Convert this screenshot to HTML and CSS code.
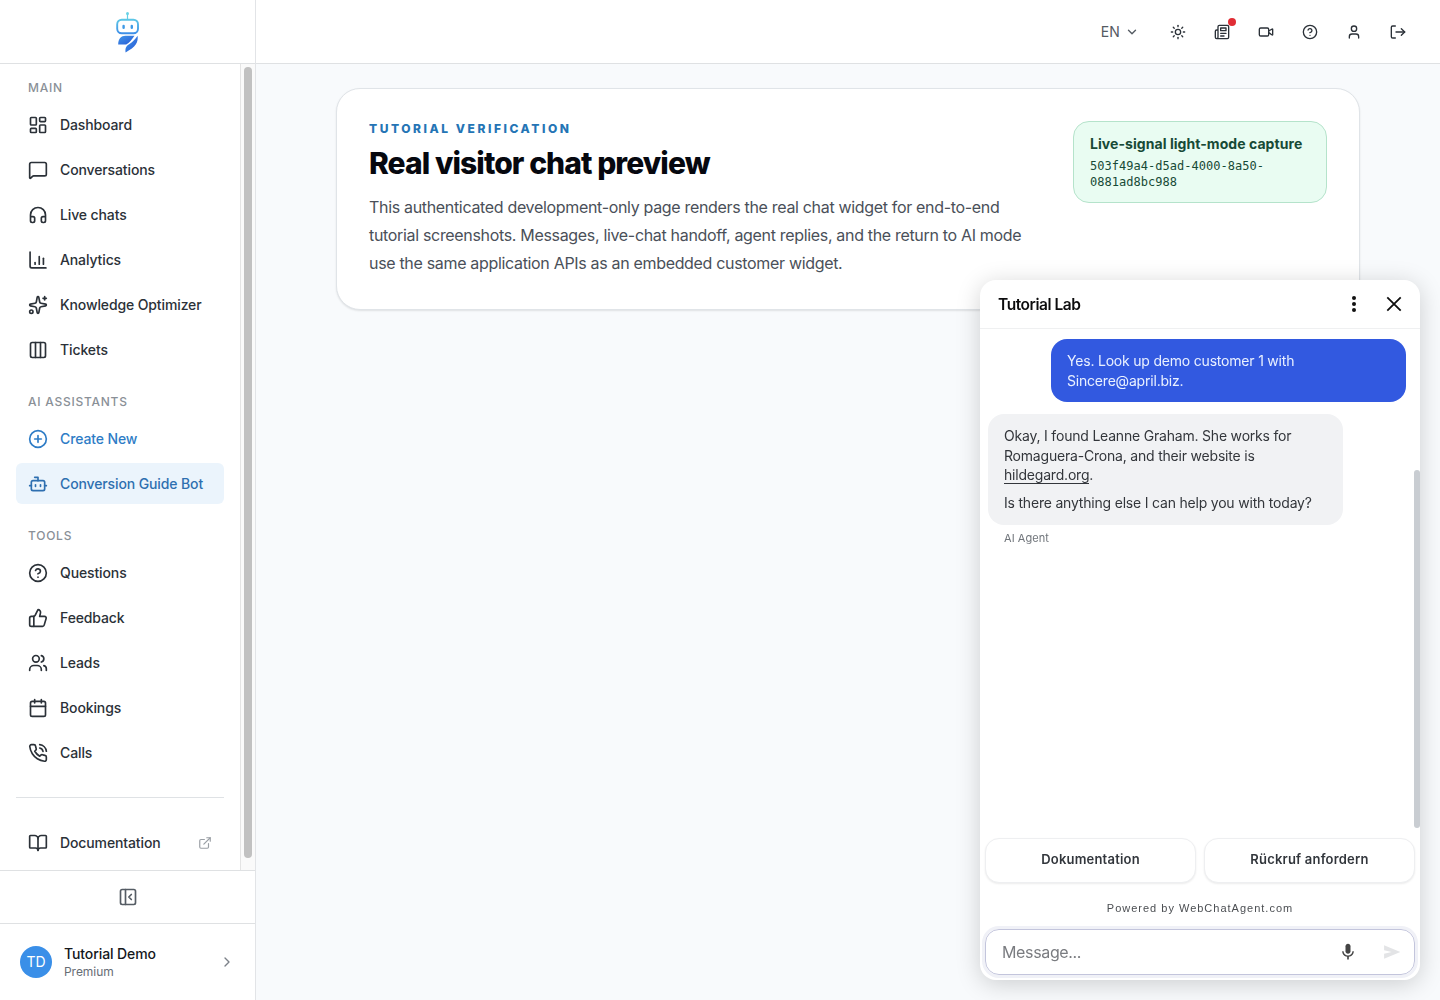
FILE: index.html
```html
<!DOCTYPE html>
<html lang="en">
<head>
    <meta charset="UTF-8">
    <meta name="viewport" content="width=device-width, initial-scale=1.0">
    <title>Real visitor chat preview</title>
    <link rel="stylesheet" href="styles.css">
</head>
<body>
<div class="app">
    <aside class="sidebar">
        <div class="logo">
            <svg width="24" height="42" viewBox="0 0 24 42">
                <defs>
                    <linearGradient id="head" x1="0" y1="0" x2="0" y2="1">
                        <stop offset="0" stop-color="#5cc6e6"/>
                        <stop offset="1" stop-color="#3d8fe8"/>
                    </linearGradient>
                    <linearGradient id="wing" x1="0" y1="0" x2="1" y2="1">
                        <stop offset="0" stop-color="#3f97ea"/>
                        <stop offset="1" stop-color="#2857d4"/>
                    </linearGradient>
                </defs>
                <circle cx="11.500" cy="2.600" r="1.500" fill="#6bd3e6"/>
                <path d="M11.500 3v6" stroke="#62cfe6" stroke-width="1.200"/>
                <rect x="1.200" y="8.700" width="20.800" height="13.600" rx="4.500" fill="none" stroke="url(#head)" stroke-width="1.900"/>
                <rect x="6.400" y="13.700" width="2.400" height="4.200" rx="1.200" fill="#3f9ae6"/>
                <rect x="14.600" y="13.700" width="2.400" height="4.200" rx="1.200" fill="#3f9ae6"/>
                <path d="M18.500 24.700H9.500c-4.500 0-7.300 3.200-7.300 8.800h8c3.300-1.500 5.500-4.800 8.300-8.800z" fill="url(#wing)"/>
                <path d="M21.600 24.800c.8 6.400-1.800 11.200-12 16.600-.6-4 .4-6.500 3.900-8.500 3.600-2 5.500-4.700 8.100-8.100z" fill="url(#wing)"/>
            </svg>
        </div>
        <div class="nav-area">
            <nav class="nav">
                <h3 class="nav-title">MAIN</h3>
                <a class="nav-item">
                    <svg class="icon" viewBox="0 0 24 24"><rect width="7" height="9" x="3" y="3" rx="1"/><rect width="7" height="5" x="14" y="3" rx="1"/><rect width="7" height="9" x="14" y="12" rx="1"/><rect width="7" height="5" x="3" y="16" rx="1"/></svg>
                    <span>Dashboard</span>
                </a>
                <a class="nav-item">
                    <svg class="icon" viewBox="0 0 24 24"><path d="M22 17a2 2 0 0 1-2 2H6.828a2 2 0 0 0-1.414.586l-2.202 2.202A.71.71 0 0 1 2 21.286V5a2 2 0 0 1 2-2h16a2 2 0 0 1 2 2z"/></svg>
                    <span>Conversations</span>
                </a>
                <a class="nav-item">
                    <svg class="icon" viewBox="0 0 24 24"><path d="M3 14h3a2 2 0 0 1 2 2v3a2 2 0 0 1-2 2H5a2 2 0 0 1-2-2v-7a9 9 0 0 1 18 0v7a2 2 0 0 1-2 2h-1a2 2 0 0 1-2-2v-3a2 2 0 0 1 2-2h3"/></svg>
                    <span>Live chats</span>
                </a>
                <a class="nav-item">
                    <svg class="icon" viewBox="0 0 24 24"><path d="M2.500 2.500v17a2 2 0 0 0 2 2h17"/><path d="M8.500 17v-2"/><path d="M13.500 17V8"/><path d="M18.500 17V10"/></svg>
                    <span>Analytics</span>
                </a>
                <a class="nav-item">
                    <svg class="icon" viewBox="0 0 24 24"><path d="M11.017 2.814a1 1 0 0 1 1.966 0l1.051 5.558a2 2 0 0 0 1.594 1.594l5.558 1.051a1 1 0 0 1 0 1.966l-5.558 1.051a2 2 0 0 0-1.594 1.594l-1.051 5.558a1 1 0 0 1-1.966 0l-1.051-5.558a2 2 0 0 0-1.594-1.594l-5.558-1.051a1 1 0 0 1 0-1.966l5.558-1.051a2 2 0 0 0 1.594-1.594z"/><path d="M20 2v4"/><path d="M22 4h-4"/><circle cx="4" cy="20" r="2"/></svg>
                    <span>Knowledge Optimizer</span>
                </a>
                <a class="nav-item">
                    <svg class="icon" viewBox="0 0 24 24"><rect width="18" height="18" x="3" y="3" rx="2"/><path d="M9 3v18"/><path d="M15 3v18"/></svg>
                    <span>Tickets</span>
                </a>
                <h3 class="nav-title nav-title-next">AI ASSISTANTS</h3>
                <a class="nav-item nav-item-link">
                    <svg class="icon" viewBox="0 0 24 24"><circle cx="12" cy="12" r="10"/><path d="M8 12h8"/><path d="M12 8v8"/></svg>
                    <span>Create New</span>
                </a>
                <a class="nav-item nav-item-active">
                    <svg class="icon" viewBox="0 0 24 24"><path d="M12 8V4H8"/><rect width="16" height="12" x="4" y="8" rx="2"/><path d="M2 14h2"/><path d="M20 14h2"/><path d="M15 13v2"/><path d="M9 13v2"/></svg>
                    <span>Conversion Guide Bot</span>
                </a>
                <h3 class="nav-title nav-title-next">TOOLS</h3>
                <a class="nav-item">
                    <svg class="icon" viewBox="0 0 24 24"><circle cx="12" cy="12" r="10"/><path d="M9.090 9a3 3 0 0 1 5.830 1c0 2-3 3-3 3"/><path d="M12 17h.01"/></svg>
                    <span>Questions</span>
                </a>
                <a class="nav-item">
                    <svg class="icon" viewBox="0 0 24 24"><path d="M7 10v12"/><path d="M15 5.880 14 10h5.830a2 2 0 0 1 1.920 2.560l-2.330 8A2 2 0 0 1 17.500 22H4a2 2 0 0 1-2-2v-8a2 2 0 0 1 2-2h2.760a2 2 0 0 0 1.790-1.110L12 2a3.130 3.130 0 0 1 3 3.880z"/></svg>
                    <span>Feedback</span>
                </a>
                <a class="nav-item">
                    <svg class="icon" viewBox="0 0 24 24"><path d="M16 21v-1a5 5 0 0 0-5-5H7a5 5 0 0 0-5 5v1"/><circle cx="9.500" cy="7" r="4"/><path d="M22 21v-2a4 4 0 0 0-3-3.870"/><path d="M16 3.130a4 4 0 0 1 0 7.750"/></svg>
                    <span>Leads</span>
                </a>
                <a class="nav-item">
                    <svg class="icon" viewBox="0 0 24 24"><path d="M8 2v4"/><path d="M16 2v4"/><rect width="18" height="18" x="3" y="4" rx="2"/><path d="M3 10h18"/></svg>
                    <span>Bookings</span>
                </a>
                <a class="nav-item">
                    <svg class="icon" viewBox="0 0 24 24"><path d="M22 16.920v3a2 2 0 0 1-2.180 2 19.790 19.790 0 0 1-8.630-3.070 19.500 19.500 0 0 1-6-6 19.790 19.790 0 0 1-3.070-8.670A2 2 0 0 1 4.110 2h3a2 2 0 0 1 2 1.720c.127.960.361 1.903.700 2.810a2 2 0 0 1-.450 2.110L8.090 9.910a16 16 0 0 0 6 6l1.270-1.270a2 2 0 0 1 2.110-.450c.907.339 1.850.573 2.810.700A2 2 0 0 1 22 16.920z"/><path d="M14.050 2a9 9 0 0 1 8 7.940"/><path d="M14.050 6A5 5 0 0 1 18 10"/></svg>
                    <span>Calls</span>
                </a>
                <div class="nav-divider"></div>
                <a class="nav-item">
                    <svg class="icon" viewBox="0 0 24 24"><path d="M12 7v14"/><path d="M3 18a1 1 0 0 1-1-1V4a1 1 0 0 1 1-1h5a4 4 0 0 1 4 4 4 4 0 0 1 4-4h5a1 1 0 0 1 1 1v13a1 1 0 0 1-1 1h-6a3 3 0 0 0-3 3 3 3 0 0 0-3-3z"/></svg>
                    <span>Documentation</span>
                    <svg class="icon icon-external" viewBox="0 0 24 24"><path d="M15 3h6v6"/><path d="M10 14 21 3"/><path d="M18 13v6a2 2 0 0 1-2 2H5a2 2 0 0 1-2-2V8a2 2 0 0 1 2-2h6"/></svg>
                </a>
            </nav>
            <div class="scroll-track"><div class="scroll-thumb"></div></div>
        </div>
        <div class="collapse">
            <svg class="icon" viewBox="0 0 24 24"><rect width="18" height="18" x="3" y="3" rx="2"/><path d="M9 3v18"/><path d="m16 15-3-3 3-3"/></svg>
        </div>
        <div class="user">
            <div class="avatar">TD</div>
            <div class="user-info">
                <div class="user-name">Tutorial Demo</div>
                <div class="user-plan">Premium</div>
            </div>
            <svg class="icon icon-chevron" viewBox="0 0 24 24"><path d="m9 18 6-6-6-6"/></svg>
        </div>
    </aside>

    <div class="page">
        <header class="topbar">
            <div class="lang">
                <span>EN</span>
                <svg class="icon" viewBox="0 0 24 24"><path d="m6 9 6 6 6-6"/></svg>
            </div>
            <div class="top-btn">
                <svg class="icon" viewBox="0 0 24 24"><circle cx="12" cy="12" r="4"/><path d="M12 2v2"/><path d="M12 20v2"/><path d="m4.930 4.930 1.410 1.410"/><path d="m17.660 17.660 1.410 1.410"/><path d="M2 12h2"/><path d="M20 12h2"/><path d="m6.340 17.660-1.410 1.410"/><path d="m19.070 4.930-1.410 1.410"/></svg>
            </div>
            <div class="top-btn">
                <svg class="icon" viewBox="0 0 24 24"><path d="M4 22h16a2 2 0 0 0 2-2V4a2 2 0 0 0-2-2H8a2 2 0 0 0-2 2v16a2 2 0 0 1-4 0v-9a2 2 0 0 1 2-2h2"/><path d="M18 14h-8"/><path d="M15 18h-5"/><path d="M10 6h8v4h-8z"/></svg>
                <span class="dot"></span>
            </div>
            <div class="top-btn">
                <svg class="icon" viewBox="0 0 24 24"><path d="m16 13 5.223 3.482a.5.5 0 0 0 .777-.416V7.870a.5.5 0 0 0-.752-.432L16 10.500"/><rect x="2" y="6" width="14" height="12" rx="2"/></svg>
            </div>
            <div class="top-btn">
                <svg class="icon" viewBox="0 0 24 24"><circle cx="12" cy="12" r="10"/><path d="M9.090 9a3 3 0 0 1 5.830 1c0 2-3 3-3 3"/><path d="M12 17h.01"/></svg>
            </div>
            <div class="top-btn">
                <svg class="icon" viewBox="0 0 24 24"><path d="M19 21v-2a4 4 0 0 0-4-4H9a4 4 0 0 0-4 4v2"/><circle cx="12" cy="7" r="4"/></svg>
            </div>
            <div class="top-btn">
                <svg class="icon" viewBox="0 0 24 24"><path d="m17 17 5-5-5-5"/><path d="M22 12H9"/><path d="M8 21H4a2 2 0 0 1-2-2V5a2 2 0 0 1 2-2h4"/></svg>
            </div>
        </header>

        <main class="content">
            <section class="card">
                <div class="card-text">
                    <p class="eyebrow">TUTORIAL VERIFICATION</p>
                    <h1>Real visitor chat preview</h1>
                    <p class="intro">This authenticated development-only page renders the real chat widget for end-to-end<br>tutorial screenshots. Messages, live-chat handoff, agent replies, and the return to AI mode<br>use the same application APIs as an embedded customer widget.</p>
                </div>
                <div class="capture">
                    <p class="capture-title">Live-signal light-mode capture</p>
                    <p class="capture-id">503f49a4-d5ad-4000-8a50-<br>0881ad8bc988</p>
                </div>
            </section>
        </main>
    </div>
</div>

<div class="chat">
    <div class="chat-header">
        <span class="chat-title">Tutorial Lab</span>
        <svg class="chat-more" width="24" height="24" viewBox="0 0 24 24"><circle cx="12" cy="6" r="2"/><circle cx="12" cy="12" r="2"/><circle cx="12" cy="18" r="2"/></svg>
        <svg class="chat-close" width="24" height="24" viewBox="0 0 24 24"><path d="M5.300 5.300l13.400 13.400M18.700 5.300L5.300 18.700"/></svg>
    </div>
    <div class="chat-body">
        <div class="messages">
            <div class="msg msg-user">
                <p>Yes. Look up demo customer 1 with<br>Sincere@april.biz.</p>
            </div>
            <div class="msg msg-bot">
                <p>Okay, I found Leanne Graham. She works for<br>Romaguera-Crona, and their website is<br><a class="msg-link">hildegard.org</a>.</p>
                <p>Is there anything else I can help you with today?</p>
            </div>
            <div class="msg-author">AI Agent</div>
        </div>
        <div class="chat-thumb"></div>
    </div>
    <div class="quick">
        <button class="quick-btn">Dokumentation</button>
        <button class="quick-btn">Rückruf anfordern</button>
    </div>
    <div class="powered">Powered by WebChatAgent.com</div>
    <div class="composer">
        <span class="placeholder">Message...</span>
        <svg class="mic" width="20" height="20" viewBox="0 0 24 24"><path d="M12 14c1.660 0 3-1.340 3-3V5c0-1.660-1.340-3-3-3S9 3.340 9 5v6c0 1.660 1.340 3 3 3z"/><path d="M17.300 11c0 3-2.540 5.100-5.300 5.100S6.700 14 6.700 11H5c0 3.410 2.720 6.230 6 6.720V21h2v-3.280c3.280-.480 6-3.300 6-6.720h-1.700z"/></svg>
        <svg class="send" width="20" height="20" viewBox="0 0 24 24"><path d="M2.500 4 22 12 2.500 20v-6l9-2-9-2z"/></svg>
    </div>
</div>
</body>
</html>
```
FILE: styles.css
```css
* {
    box-sizing: border-box;
}

body {
    margin: 0;
    font-family: Inter, "Liberation Sans", sans-serif;
    background-color: #f8fafc;
    color: #2b3138;
    overflow: hidden;
}

h1, h3, p {
    margin: 0;
}

.app {
    display: flex;
    height: 1000px;
}

.icon {
    width: 20px;
    height: 20px;
    flex-shrink: 0;
    fill: none;
    stroke: currentColor;
    stroke-width: 2;
    stroke-linecap: round;
    stroke-linejoin: round;
}

/* sidebar */
.sidebar {
    width: 256px;
    flex-shrink: 0;
    display: flex;
    flex-direction: column;
    background-color: #fff;
    border-right: 1px solid #e2e4e7;
}

.logo {
    height: 64px;
    display: flex;
    align-items: center;
    justify-content: center;
    border-bottom: 1px solid #dfe1e3;
}

.nav-area {
    flex: 1;
    min-height: 0;
    display: flex;
}

.nav {
    flex: 1;
    padding: 16px 16px 0;
    overflow: hidden;
}

.nav-title {
    height: 16px;
    margin: 0 0 8px 12px;
    font-size: 12px;
    line-height: 16px;
    font-weight: 500;
    letter-spacing: 0.75px;
    color: #8a9097;
}

.nav-title-next {
    margin-top: 24px;
}

.nav-item {
    height: 41px;
    margin-bottom: 4px;
    padding: 0 12px;
    display: flex;
    align-items: center;
    gap: 12px;
    border-radius: 6px;
    font-size: 14px;
    font-weight: 500;
    letter-spacing: -0.12px;
    color: #2b3138;
}

.nav-item-link {
    color: #2e7cc6;
}

.nav-item-active {
    color: #2e6fb0;
    background-color: #ebf4fc;
}

.nav-divider {
    height: 1px;
    margin: 24px 0;
    background-color: #dfe2e5;
}

.icon-external {
    width: 14px;
    height: 14px;
    margin-left: auto;
    color: #9a9fa5;
}

.scroll-track {
    width: 15px;
    padding: 3px 3px 12px;
    border-left: 1px solid #e4e4e4;
    background-color: #fafafa;
}

.scroll-thumb {
    width: 8px;
    height: 100%;
    border-radius: 4px;
    background-color: #c1c1c1;
}

.collapse {
    height: 53px;
    display: flex;
    align-items: center;
    justify-content: center;
    border-top: 1px solid #dfe1e3;
    color: #555c64;
}

.user {
    height: 77px;
    padding: 0 20px;
    display: flex;
    align-items: center;
    border-top: 1px solid #dfe1e3;
}

.avatar {
    width: 32px;
    height: 32px;
    margin-right: 12px;
    border-radius: 50%;
    background-color: #3a8fe8;
    color: #fff;
    font-size: 14px;
    line-height: 32px;
    text-align: center;
}

.user-name {
    font-size: 14px;
    line-height: 18px;
    font-weight: 500;
    letter-spacing: -0.1px;
    color: #15181c;
}

.user-plan {
    padding-top: 1px;
    font-size: 12px;
    line-height: 16px;
    letter-spacing: -0.05px;
    color: #676d75;
}

.icon-chevron {
    width: 16px;
    height: 16px;
    margin-left: auto;
    color: #7b8188;
}

/* page */
.page {
    flex: 1;
}

.topbar {
    height: 64px;
    padding-right: 24px;
    display: flex;
    align-items: center;
    justify-content: flex-end;
    gap: 8px;
    background-color: #fff;
    border-bottom: 1px solid #dfe1e3;
}

.topbar .icon {
    width: 16px;
    height: 16px;
}

.lang {
    display: flex;
    align-items: center;
    gap: 5px;
    margin-right: 13px;
    font-size: 14px;
    letter-spacing: 0.1px;
    color: #555b63;
}

.topbar .lang .icon {
    width: 14px;
    height: 14px;
    stroke-width: 2.4;
}

.top-btn {
    position: relative;
    width: 36px;
    height: 36px;
    display: flex;
    align-items: center;
    justify-content: center;
}

.dot {
    position: absolute;
    top: 4px;
    right: 4px;
    width: 8px;
    height: 8px;
    border-radius: 50%;
    background-color: #e02d35;
}

.content {
    padding: 24px 80px;
}

.card {
    height: 222px;
    padding: 32px;
    display: flex;
    justify-content: space-between;
    align-items: flex-start;
    background-color: #fff;
    border: 1px solid #e0e4e8;
    border-radius: 24px;
    box-shadow: 0 1px 2px rgba(0, 0, 0, 0.1);
}

.eyebrow {
    font-size: 12px;
    line-height: 16px;
    font-weight: 800;
    letter-spacing: 2.55px;
    color: #2474b5;
}

h1 {
    margin-top: 8px;
    font-size: 30px;
    line-height: 36px;
    font-weight: 800;
    letter-spacing: -0.92px;
    color: #06080f;
}

.intro {
    margin-top: 12px;
    font-size: 16px;
    line-height: 28px;
    color: #4a5059;
    white-space: nowrap;
    letter-spacing: -0.325px;
}

.capture {
    width: 254px;
    padding: 12px 16px;
    background-color: #e9fcf2;
    border: 1px solid #b5e3cb;
    border-radius: 16px;
    color: #174a36;
    white-space: nowrap;
}

.capture-title {
    font-size: 14px;
    line-height: 20px;
    font-weight: 700;
    letter-spacing: 0.06px;
}

.capture-id {
    margin-top: 4px;
    font-family: "DejaVu Sans Mono", monospace;
    font-size: 12px;
    line-height: 16px;
    letter-spacing: 0.02px;
}

/* chat widget, floats over the page */
.chat {
    position: fixed;
    right: 20px;
    bottom: 20px;
    width: 440px;
    height: 700px;
    display: flex;
    flex-direction: column;
    background-color: #fff;
    border-radius: 16px;
    box-shadow: 0 4px 24px rgba(0, 0, 0, 0.18);
    overflow: hidden;
}

.chat-header {
    height: 49px;
    padding: 0 14px 0 18px;
    display: flex;
    align-items: center;
    border-bottom: 1px solid #eff0f1;
}

.chat-title {
    flex: 1;
    font-size: 15.5px;
    font-weight: 600;
    letter-spacing: -0.45px;
    color: #0c0c0d;
}

.chat-more {
    margin-right: 16px;
    fill: #111;
}

.chat-close {
    stroke: #111;
    stroke-width: 1.8;
}

.chat-body {
    height: 499px;
    display: flex;
}

.messages {
    flex: 1;
    padding: 10px 8px 0;
    display: flex;
    flex-direction: column;
}

.msg {
    width: 355px;
    padding: 12px 16px;
    border-radius: 16px;
    font-size: 14px;
    line-height: 19.6px;
    letter-spacing: -0.2px;
    white-space: nowrap;
}

.msg-user {
    align-self: flex-end;
    margin-bottom: 12px;
    background-color: #3259e0;
    color: #e9f0ff;
}

.msg-bot {
    background-color: #f1f2f4;
    color: #33363b;
}

.msg p + p {
    margin-top: 8px;
}

.msg-link {
    border-bottom: 1px solid #33363b;
}

.msg-author {
    margin: 5px 16px 0;
    font-size: 11px;
    line-height: 16px;
    letter-spacing: 0.05px;
    color: #70757b;
}

.chat-thumb {
    width: 6px;
    height: 358px;
    align-self: flex-end;
    border-radius: 3px;
    background-color: #c9cdd2;
}

.quick {
    padding: 10px 5px 0;
    display: flex;
    gap: 8px;
}

.quick-btn {
    flex: 1;
    height: 45px;
    padding: 0 0 3px;
    background-color: #fff;
    border: 1px solid #eeeff1;
    border-radius: 14px;
    box-shadow: 0 1px 2px rgba(0, 0, 0, 0.08);
    font-family: inherit;
    font-size: 13px;
    font-weight: 600;
    letter-spacing: 0.2px;
    color: #32363c;
}

.powered {
    margin-top: 17px;
    font-family: "Liberation Sans", Arial, sans-serif;
    font-size: 11px;
    line-height: 16px;
    letter-spacing: 1px;
    text-align: center;
    color: #4b4e52;
}

.composer {
    height: 46px;
    margin: 13px 5px 0;
    padding: 0 12px 0 16px;
    display: flex;
    align-items: center;
    border: 1px solid #c3c5dc;
    border-radius: 14px;
    box-shadow: 0 0 0 3px #f0f1f7;
}

.placeholder {
    flex: 1;
    font-size: 16px;
    letter-spacing: -0.35px;
    color: #7a7c80;
}

.mic {
    margin-right: 24px;
    fill: #444;
}

.send {
    fill: #e3e4e6;
}
```
